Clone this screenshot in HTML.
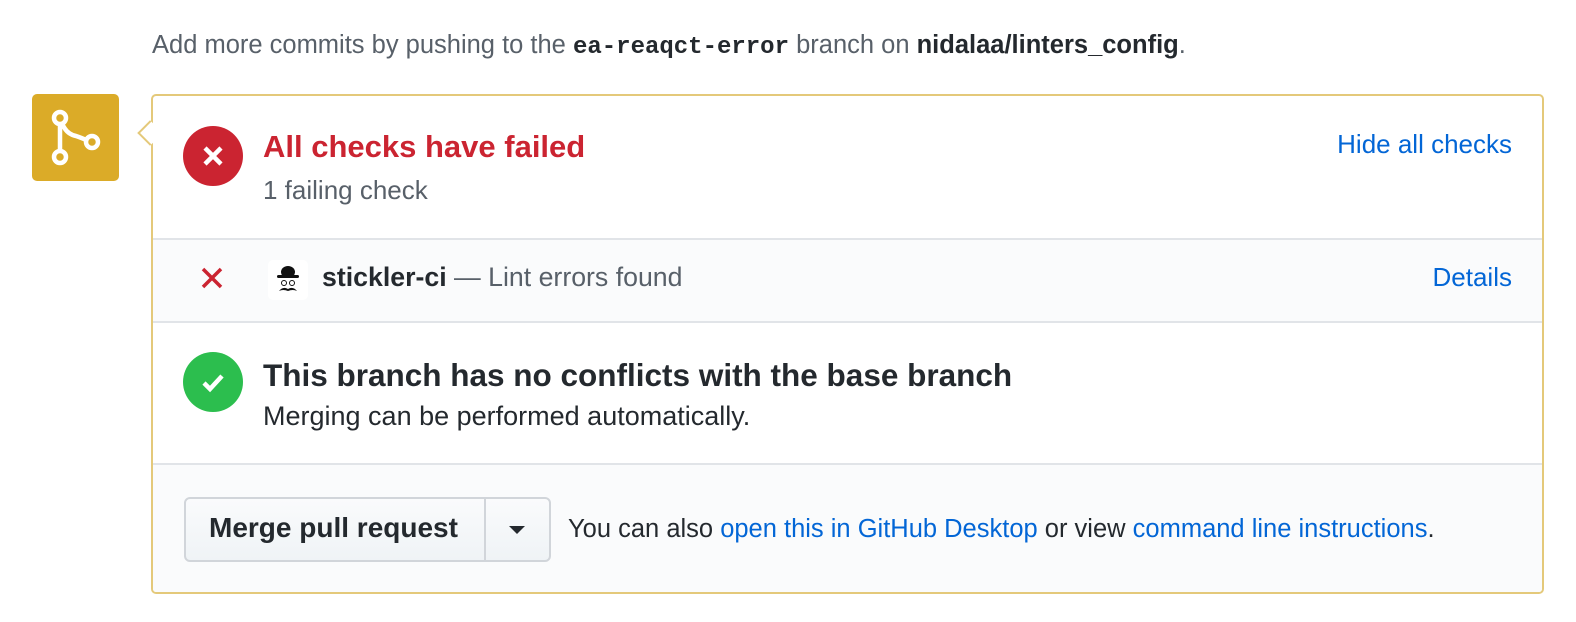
<!DOCTYPE html>
<html><head><style>
body{margin:0;width:1576px;height:622px;background:#fff;font-family:"Liberation Sans",sans-serif;color:#24292e;position:relative;overflow:hidden}
.a{position:absolute;white-space:nowrap}
a{color:#0366d6;text-decoration:none}
</style></head><body>
<div class="a" style="left:152px;top:31px;font-size:25.5px;color:#586069">Add more commits by pushing to the <b style="font-family:'Liberation Mono',monospace;color:#24292e;font-size:24px">ea-reaqct-error</b> branch on <b style="color:#24292e">nidalaa/linters_config</b>.</div>
<div class="a" style="left:32px;top:94px;width:87px;height:87px;background:#dbab28;border-radius:5px">
<svg width="87" height="87" viewBox="0 0 87 87"><g fill="none" stroke="#fff" stroke-width="4.5"><circle cx="28" cy="24" r="6"/><circle cx="28" cy="63" r="6"/><circle cx="60" cy="48" r="6"/><path d="M28 30V57M30 29Q34 40 44 42Q50 44 54 46"/></g></svg></div>
<div class="a" style="left:151px;top:94px;width:1389px;height:496px;border:2px solid #e4c97a;border-radius:5px;overflow:hidden">
 <div style="position:absolute;left:0;top:142px;width:100%;height:81px;background:#fafbfc;border-top:2px solid #e1e4e8;border-bottom:2px solid #e1e4e8"></div>
 <div style="position:absolute;left:0;top:367px;width:100%;height:140px;background:#fafbfc;border-top:2px solid #e1e4e8"></div>
</div>
<div class="a" style="left:141px;top:124px;width:16px;height:16px;background:#fff;border-left:2px solid #e4c97a;border-bottom:2px solid #e4c97a;transform:rotate(45deg)"></div>
<div class="a" style="left:183px;top:126px;width:60px;height:60px;border-radius:50%;background:#cb2431"><svg width="60" height="60"><path d="M22 22L38 38M38 22L22 38" stroke="#fff" stroke-width="4.5"/></svg></div>
<div class="a" style="left:263px;top:129px;font-size:31px;font-weight:bold;color:#cb2431">All checks have failed</div>
<div class="a" style="left:263px;top:175px;font-size:26px;color:#586069">1 failing check</div>
<div class="a" style="right:64px;top:129px;font-size:26px"><a>Hide all checks</a></div>
<svg class="a" style="left:200px;top:266px" width="24" height="24"><path d="M3 3L21 21M21 3L3 21" stroke="#cb2431" stroke-width="3.5"/></svg>
<div class="a" style="left:268px;top:260px;width:40px;height:40px;background:#fff;border-radius:5px"><svg width="40" height="40"><ellipse cx="20" cy="12" rx="7" ry="6" fill="#111"/><rect x="9" y="15" width="22" height="3" rx="1.5" fill="#111"/><circle cx="16" cy="23" r="2.5" fill="none" stroke="#111" stroke-width="1"/><circle cx="24" cy="23" r="2.5" fill="none" stroke="#111" stroke-width="1"/><path d="M11 31Q15 26 20 29Q25 26 29 31Q25 29 20 31Q15 29 11 31Z" fill="#111"/></svg></div>
<div class="a" style="left:322px;top:262px;font-size:26.7px;color:#586069"><b style="color:#24292e">stickler-ci</b> — Lint errors found</div>
<div class="a" style="right:64px;top:262px;font-size:26px"><a>Details</a></div>
<div class="a" style="left:183px;top:352px;width:60px;height:60px;border-radius:50%;background:#2cbe4e"><svg width="60" height="60"><path d="M21 31L27 37L39 24" fill="none" stroke="#fff" stroke-width="4.5"/></svg></div>
<div class="a" style="left:263px;top:357px;font-size:31.5px;font-weight:bold">This branch has no conflicts with the base branch</div>
<div class="a" style="left:263px;top:401px;font-size:27px">Merging can be performed automatically.</div>
<div class="a" style="left:184px;top:497px;width:367px;height:65px;border:2px solid #d1d5da;border-radius:6px;background:linear-gradient(#fafbfc,#eff3f6);box-sizing:border-box"></div>
<div class="a" style="left:484px;top:497px;width:2px;height:65px;background:#d1d5da"></div>
<div class="a" style="left:209px;top:512px;font-size:28px;font-weight:bold">Merge pull request</div>
<svg class="a" style="left:509px;top:526px" width="16" height="8"><path d="M0 0H16L8 8Z" fill="#24292e"/></svg>
<div class="a" style="left:568px;top:515px;font-size:25.5px">You can also <a>open this in GitHub Desktop</a> or view <a>command line instructions</a>.</div>
</body></html>
